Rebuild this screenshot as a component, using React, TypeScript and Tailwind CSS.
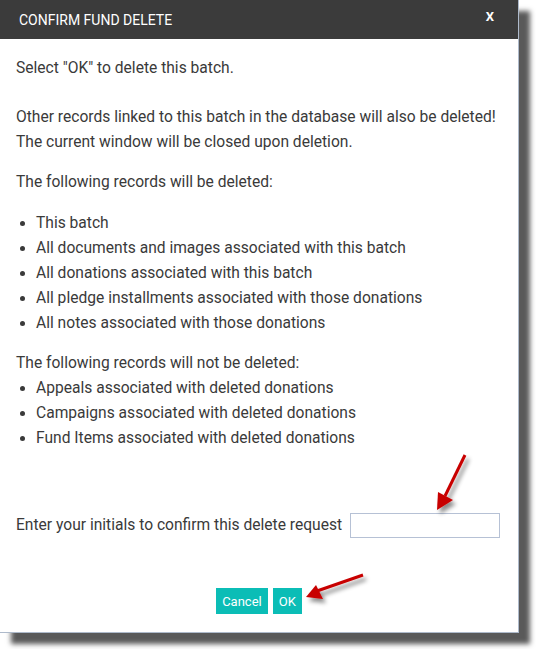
import { useState } from "react";

const deleted = [
  "This batch",
  "All documents and images associated with this batch",
  "All donations associated with this batch",
  "All pledge installments associated with those donations",
  "All notes associated with those donations",
];

const kept = [
  "Appeals associated with deleted donations",
  "Campaigns associated with deleted donations",
  "Fund Items associated with deleted donations",
];

const App = () => {
  const [initials, setInitials] = useState("");

  return (
    <div className="relative h-[649px] w-[536px] overflow-hidden bg-white font-['Roboto',sans-serif]">
      {/* Dialog */}
      <div className="flex h-[633px] w-[519px] flex-col border-r border-b border-[#aebacb] bg-white shadow-[11px_11px_5px_rgba(0,0,0,0.65)]">
        {/* Header */}
        <div className="flex h-[39px] shrink-0 items-center justify-between bg-[#3b3b3b] pl-[19px] pr-[24px]">
          <h2 className="pt-[1px] text-[14px] text-white">CONFIRM FUND DELETE</h2>
          <button className="-mt-[5px] text-[13px] font-bold text-white">X</button>
        </div>

        {/* Body */}
        <div className="flex flex-1 flex-col px-4 text-[15.6px] leading-[25px] text-[#3a3a3a]">
          <p className="mt-[17px]">Select "OK" to delete this batch.</p>

          <p className="mt-[24px]">
            Other records linked to this batch in the database will also be deleted!
            <br />
            The current window will be closed upon deletion.
          </p>

          <p className="mt-[15px]">The following records will be deleted:</p>

          <ul className="mt-[16px] list-disc pl-5">
            {deleted.map((item) => (
              <li key={item}>{item}</li>
            ))}
          </ul>

          <p className="mt-[15px]">The following records will not be deleted:</p>
          <ul className="list-disc pl-5">
            {kept.map((item) => (
              <li key={item}>{item}</li>
            ))}
          </ul>

          <div className="mt-[62px] flex items-center gap-2">
            <span>Enter your initials to confirm this delete request</span>
            <input
              value={initials}
              onChange={(e) => setInitials(e.target.value)}
              className="h-[25px] w-[150px] border border-[#b6c1d5] bg-white px-1 text-[14px] outline-none"
            />
          </div>

          <div className="mt-[50px] flex justify-center gap-[5px]">
            <button className="h-[26px] bg-[#0bbdb6] px-[6px] text-[13px] text-white">
              Cancel
            </button>
            <button className="h-[26px] bg-[#0bbdb6] px-[6px] text-[13px] text-white">
              OK
            </button>
          </div>
        </div>
      </div>

      {/* Annotation arrows */}
      <svg
        className="pointer-events-none absolute left-0 top-0"
        width="536"
        height="649"
        viewBox="0 0 536 649"
      >
        <defs>
          <filter id="arrowShadow" x="-50%" y="-50%" width="200%" height="200%">
            <feDropShadow dx="3" dy="4" stdDeviation="2" floodColor="#000" floodOpacity="0.45" />
          </filter>
        </defs>
        <g filter="url(#arrowShadow)" fill="#c80000" stroke="#c80000">
          <line x1="465" y1="455" x2="445" y2="496" strokeWidth="3" />
          <polygon points="438,492 453,500 437,510" strokeWidth="0" />
          <line x1="363" y1="575" x2="317" y2="591" strokeWidth="3" />
          <polygon points="316,585 323,599 306,597" strokeWidth="0" />
        </g>
      </svg>
    </div>
  );
};

export default App;
